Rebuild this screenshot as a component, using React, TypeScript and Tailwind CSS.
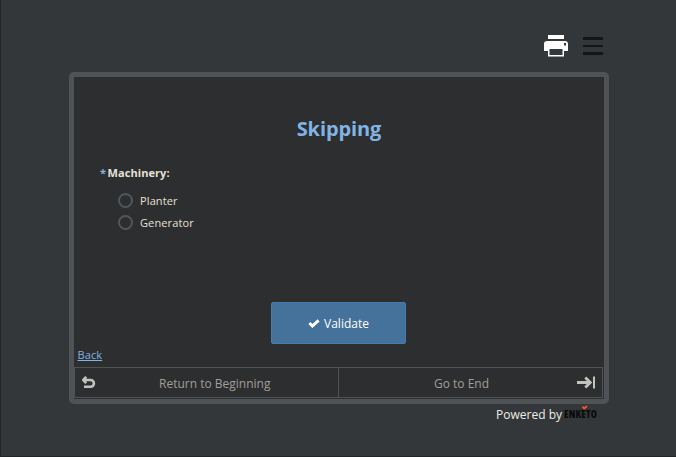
import type { ReactNode } from 'react';

const PrinterIcon = () => (
  <svg width="24" height="22" viewBox="0 0 24 22">
    <path fill="#fff" d="M4 0h16v4H4z" />
    <path fill="#fff" fillRule="evenodd" d="M3 6h18a3 3 0 0 1 3 3v7h-4v5.500H4V16H0V9a3 3 0 0 1 3-3zm2.500 8v6h13v-6zM20 8v2.500h2V8z" />
  </svg>
);

const MenuIcon = () => (
  <svg width="20" height="18" viewBox="0 0 20 18">
    <path fill="#141516" d="M0 0h20v3H0zM0 8h20v2H0zM0 15h20v3H0z" />
  </svg>
);

const CheckIcon = () => (
  <svg width="12" height="9" viewBox="0 0 12 9">
    <path d="M1.400 4l3 3L10.600 1.400" fill="none" stroke="#fff" strokeWidth="3" />
  </svg>
);

const ReturnIcon = () => (
  <svg width="14" height="13" viewBox="0 0 14 13" fill="none" stroke="#c2c2be" strokeWidth="2.600">
    <path d="M4.200.8L1.300 4l2.900 3.200M1.500 4h7a3.300 3.300 0 0 1 0 6.800H2" />
  </svg>
);

const EndIcon = () => (
  <svg width="18" height="13" viewBox="0 0 18 13" fill="none" stroke="#c2c2be" strokeWidth="2.800">
    <path d="M0 6.500h13M8.300 1.500l5 5-5 5" />
    <path d="M17 .500v12" strokeWidth="2" />
  </svg>
);

const EnketoLogo = () => (
  <svg width="34" height="18" viewBox="0 0 34 18" className="-mt-[2px] overflow-visible">
    <text
      x="0"
      y="13.500"
      textLength="33"
      lengthAdjust="spacing"
      fill="#0b0b0b"
      fontFamily="Open Sans, sans-serif"
      fontSize="10"
      fontWeight="800"
      fontStretch="condensed"
    >
      ENKETO
    </text>
    <path d="M18.300 2.700l2 1.800L23 2" fill="none" stroke="#f0532b" strokeWidth="1.900" />
  </svg>
);

const RadioOption = ({ label }: { label: string }) => (
  <label className="flex h-[22px] items-center">
    <span className="size-[15px] rounded-full border-2 border-[#50575b]" />
    <span className="ml-[7px] pt-[2px] text-[11px] tracking-[0.12px] text-[#e6e1d6]">{label}</span>
  </label>
);

const NavButton = ({ children }: { children: ReactNode }) => (
  <button className="flex h-full items-center pt-[2px] text-[12px] text-[#a09e99]">{children}</button>
);

export default function App() {
  return (
    <div className="flex h-[457px] w-[676px] flex-col border-b border-l border-[#232425] bg-[#333739] pl-[68px] font-['Open_Sans',sans-serif]">
      <header className="flex h-[72px] w-[540px] shrink-0 items-start justify-end gap-[15px] pr-[6px] pt-[35px]">
        <PrinterIcon />
        <div className="pt-[2px]">
          <MenuIcon />
        </div>
      </header>

      <main className="flex h-[332px] w-[540px] shrink-0 flex-col rounded-[5px] border-[5px] border-[#505355] bg-[#2d2e2f]">
        <h1 className="mt-[37px] text-center text-[20px] font-bold leading-[30px] tracking-[-0.1px] text-[#81b4e5]">
          Skipping
        </h1>

        <fieldset className="mt-[21px] pl-[26px]">
          <legend className="text-[11px] font-bold leading-[16px] tracking-[0.07px] text-[#e6e1d6]">
            <span className="mr-[1.500px] text-[#81b4e5]">*</span>Machinery:
          </legend>
          <div className="mt-[8px] pl-[18px]">
            <RadioOption label="Planter" />
            <RadioOption label="Generator" />
          </div>
        </fieldset>

        <button className="ml-[197px] mt-[69px] flex h-[42px] w-[135px] items-center justify-center gap-1 rounded-[2px] border border-[#477bab] bg-[#45729b] text-[12px] text-white">
          <CheckIcon />
          <span className="pt-[2px]">Validate</span>
        </button>

        <a href="#" className="ml-[3.500px] mt-[3px] self-start text-[11px] leading-[16px] tracking-[0.1px] text-[#81b4e5] underline">
          Back
        </a>

        <nav className="mb-px mt-auto flex h-[31px] w-[529px] border border-[#505355]">
          <div className="flex w-[264px] items-center border-r border-[#505355] pl-[7px]">
            <ReturnIcon />
            <div className="ml-[63px]">
              <NavButton>Return to Beginning</NavButton>
            </div>
          </div>
          <div className="flex flex-1 items-center justify-between pl-[95px] pr-[7px]">
            <NavButton>Go to End</NavButton>
            <EndIcon />
          </div>
        </nav>
      </main>

      <footer className="flex w-[540px] justify-end pr-[11px] pt-[2px] text-[12px] leading-[18px] text-[#f0ece3]">
        <span className="mr-[2px]">Powered by</span>
        <EnketoLogo />
      </footer>
    </div>
  );
}
